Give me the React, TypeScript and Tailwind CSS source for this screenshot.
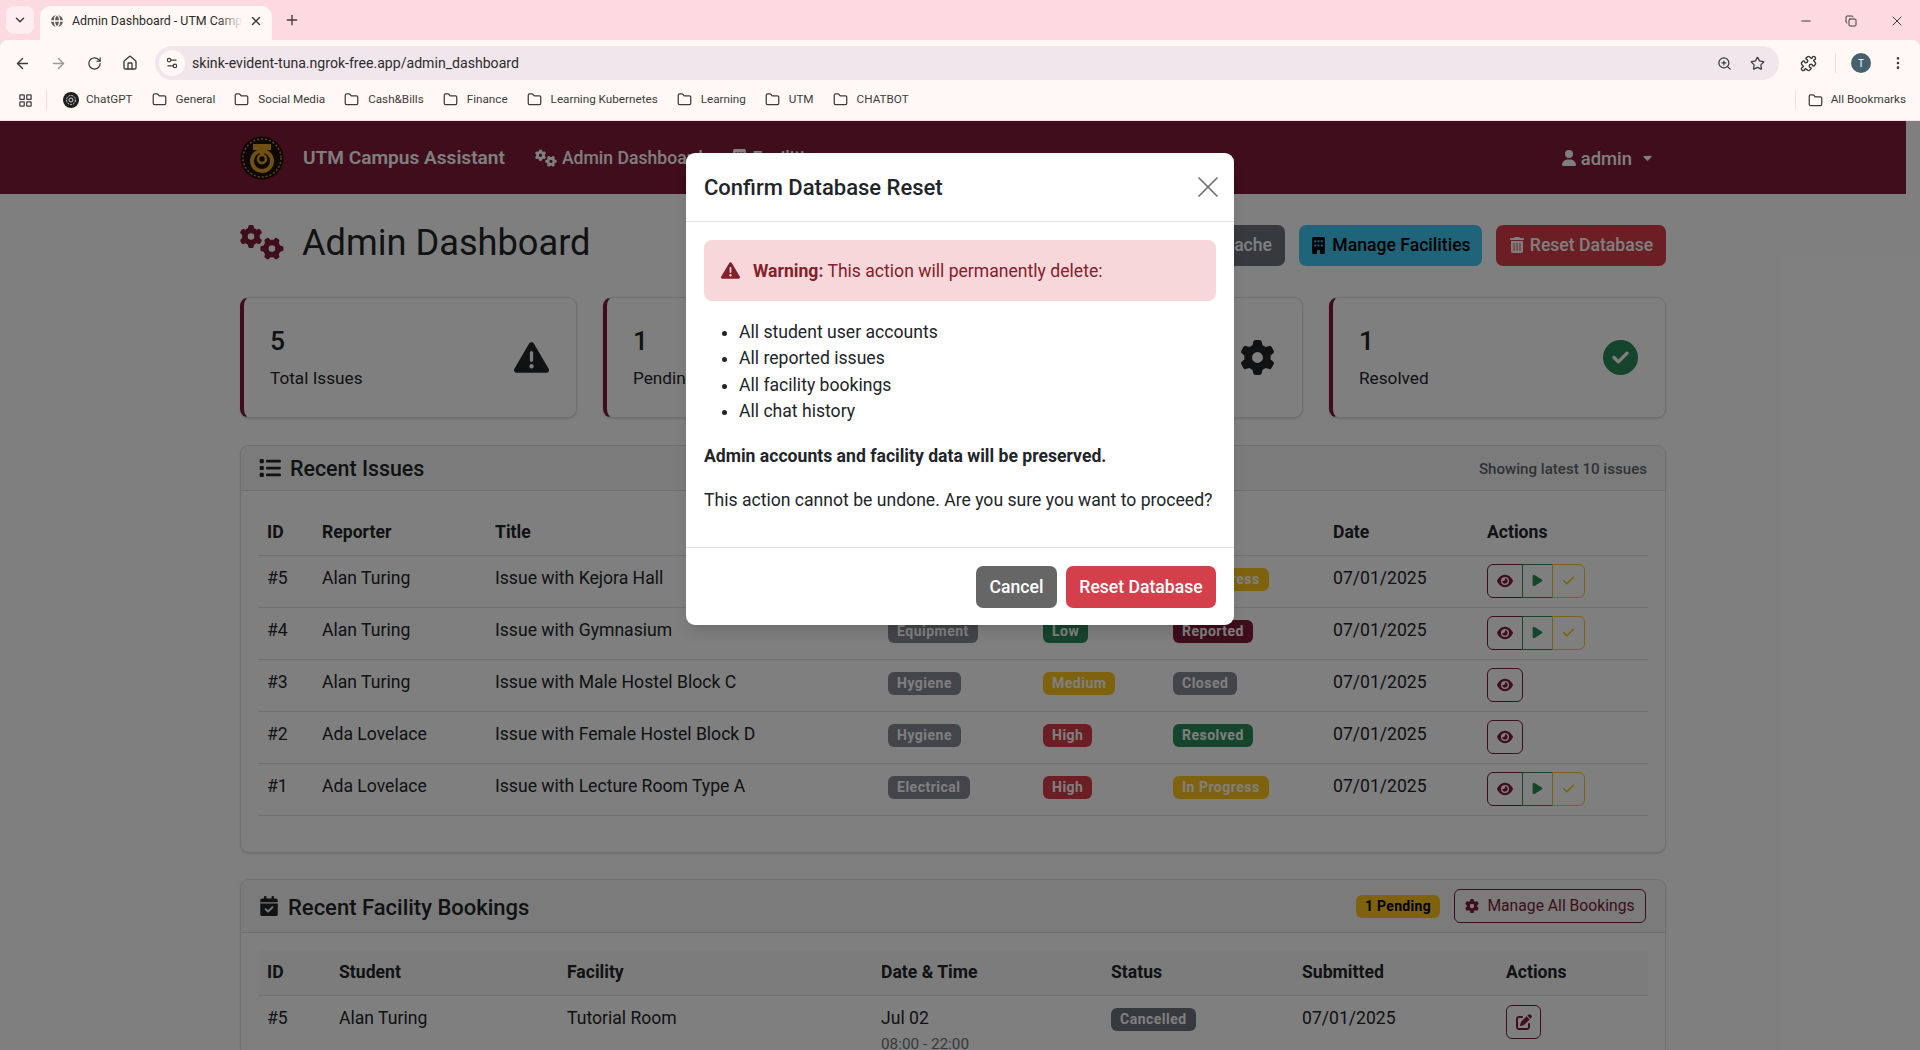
import {
  ArrowLeft,
  ArrowRight,
  ChevronDown,
  Copy,
  EllipsisVertical,
  Folder,
  Globe,
  House,
  LayoutGrid,
  Minus,
  Plus,
  Puzzle,
  RotateCw,
  Settings2,
  Star,
  X,
  ZoomIn,
} from "lucide-react";
import {
  FaBroom,
  FaBuilding,
  FaCalendarCheck,
  FaCaretDown,
  FaCheck,
  FaCircleCheck,
  FaEye,
  FaGear,
  FaGears,
  FaList,
  FaPenToSquare,
  FaPlay,
  FaTrashCan,
  FaTriangleExclamation,
  FaUser,
} from "react-icons/fa6";

const bookmarks = [
  "General",
  "Social Media",
  "Cash&Bills",
  "Finance",
  "Learning Kubernetes",
  "Learning",
  "UTM",
  "CHATBOT",
];

const gray = "bg-[#868b94] text-white";
const yellow = "bg-[#fdc51a] text-white";
const red = "bg-[#d63f4b] text-white";
const green = "bg-[#2c8a5a] text-white";
const maroon = "bg-[#7e1a36] text-white";

const issues = [
  { id: "#5", who: "Alan Turing", title: "Issue with Kejora Hall", cat: "Facility", pri: "Medium", priCls: yellow, status: "In Progress", statusCls: yellow, full: true },
  { id: "#4", who: "Alan Turing", title: "Issue with Gymnasium", cat: "Equipment", pri: "Low", priCls: green, status: "Reported", statusCls: maroon, full: true },
  { id: "#3", who: "Alan Turing", title: "Issue with Male Hostel Block C", cat: "Hygiene", pri: "Medium", priCls: yellow, status: "Closed", statusCls: gray, full: false },
  { id: "#2", who: "Ada Lovelace", title: "Issue with Female Hostel Block D", cat: "Hygiene", pri: "High", priCls: red, status: "Resolved", statusCls: green, full: false },
  { id: "#1", who: "Ada Lovelace", title: "Issue with Lecture Room Type A", cat: "Electrical", pri: "High", priCls: red, status: "In Progress", statusCls: yellow, full: true },
];

function Badge({ cls, children }: { cls: string; children: React.ReactNode }) {
  return (
    <span className={`inline-block rounded-[6px] px-[9px] py-[4px] text-[14px] leading-[15px] font-bold tracking-[0.5px] ${cls}`}>
      {children}
    </span>
  );
}

function BrowserChrome() {
  return (
    <div className="bg-[#fdd9e0] text-[#3c3c3c]">
      {/* Tab strip */}
      <div className="flex h-[40px] items-end pl-[6px]">
        <div className="mb-[6px] flex h-[28px] w-[28px] items-center justify-center rounded-[8px] bg-[#feeef1]">
          <ChevronDown size={14} strokeWidth={2.5} />
        </div>
        <div className="ml-[6px] flex h-[34px] w-[232px] items-center rounded-t-[10px] bg-[#fff8f5] pb-[4px] pl-[9px] pr-[9px]">
          <Globe size={16} className="shrink-0 fill-[#5a5a5a] text-[#fff8f5]" />
          <span className="relative ml-[7px] w-[178px] overflow-hidden text-[12.4px] whitespace-nowrap text-[#2c2c2c]">
            Admin Dashboard - UTM Campus Assistant
            <span className="absolute inset-y-0 right-0 w-[26px] bg-linear-to-r from-transparent to-[#fff8f5]" />
          </span>
          <X size={14} strokeWidth={2.5} className="ml-[6px] shrink-0" />
        </div>
        <Plus size={16} className="mb-[12px] ml-[12px]" />
        <div className="mb-[11px] ml-auto flex items-center gap-[32px] pr-[15px]">
          <Minus size={14} />
          <Copy size={12} />
          <X size={16} strokeWidth={1.5} />
        </div>
      </div>

      {/* Toolbar */}
      <div className="rounded-t-[8px] bg-[#fff8f5]">
        <div className="flex h-[46px] items-center pl-[14px]">
          <ArrowLeft size={17} />
          <ArrowRight size={17} className="ml-[19px] text-[#9a9a9a]" />
          <RotateCw size={15} className="ml-[20px]" />
          <House size={16} className="ml-[20px]" />
          <div className="ml-[17px] flex h-[34px] w-[1624px] items-center rounded-full bg-[#f0e6ec] pl-[4px] pr-[14px]">
            <div className="flex h-[26px] w-[26px] items-center justify-center rounded-full bg-[#fff8f5]">
              <Settings2 size={14} />
            </div>
            <span className="ml-[7px] pt-[1px] text-[14.1px] text-[#2c2c2c]">skink-evident-tuna.ngrok-free.app/admin_dashboard</span>
            <ZoomIn size={15} className="ml-auto" />
            <Star size={15} className="ml-[18px]" />
          </div>
          <Puzzle size={17} className="ml-[21px]" />
          <div className="ml-[18px] h-[20px] w-px bg-[#fdd9e0]" />
          <div className="ml-[15px] flex h-[20px] w-[20px] items-center justify-center rounded-full bg-[#47606e] text-[10px] text-white">
            T
          </div>
          <EllipsisVertical size={16} className="ml-[19px]" />
        </div>
        <div className="flex h-[35px] items-center border-b border-[#fbdde3] pb-[6px] pl-[18px] pr-[14px] text-[11.7px] text-[#3c3c3c]">
          <LayoutGrid size={15} />
          <div className="ml-[13px] h-[20px] w-px bg-[#fdd9e0]" />
          <svg width="16" height="16" viewBox="0 0 16 16" className="ml-[16px]">
            <circle cx="8" cy="8" r="8" fill="#1f1f1f" />
            <circle cx="8" cy="8" r="4.5" fill="none" stroke="#d8d8d8" strokeWidth="1" strokeDasharray="2 1" />
            <circle cx="8" cy="8" r="2" fill="none" stroke="#d8d8d8" strokeWidth="1" />
          </svg>
          <span className="ml-[7px]">ChatGPT</span>
          {bookmarks.map((b) => (
            <div key={b} className="ml-[19px] flex items-center gap-[9px]">
              <Folder size={15} />
              <span>{b}</span>
            </div>
          ))}
          <div className="ml-auto h-[20px] w-px bg-[#fdd9e0]" />
          <Folder size={15} className="ml-[12px]" />
          <span className="ml-[8px]">All Bookmarks</span>
        </div>
      </div>
    </div>
  );
}

function Navbar() {
  return (
    <div className="flex h-[73px] justify-center bg-[#7e1a36] text-white">
      <div className="flex w-[1426px] items-center">
        <svg width="44" height="44" viewBox="0 0 44 44" className="shrink-0">
          <circle cx="22" cy="22" r="21.5" fill="#1c1008" />
          <circle cx="22" cy="22" r="19" fill="none" stroke="#c8911f" strokeWidth="1.4" strokeDasharray="2 2" />
          <rect x="13" y="8" width="18" height="6" fill="#e0a026" />
          <rect x="20" y="14" width="4" height="6" fill="#e0a026" />
          <circle cx="22" cy="25" r="10" fill="none" stroke="#e0a026" strokeWidth="4" />
          <circle cx="22" cy="23" r="4" fill="none" stroke="#e0a026" strokeWidth="2.5" />
        </svg>
        <span className="ml-[19px] pt-[2px] text-[19.1px] font-semibold">UTM Campus Assistant</span>
        <FaGears size={22} className="ml-[30px]" />
        <span className="ml-[5px] pt-[2px] text-[17.6px] font-medium">Admin Dashboard</span>
        <FaBuilding size={17} className="ml-[28px]" />
        <span className="ml-[5px] pt-[2px] text-[17.6px] font-medium">Facilities</span>
        <FaUser size={16} className="ml-auto" />
        <span className="ml-[4px] pt-[2px] text-[18.4px] font-medium">admin</span>
        <FaCaretDown size={13} className="ml-[9px] mr-[12px]" />
      </div>
    </div>
  );
}

function StatCard({ value, label, icon }: { value: string; label: string; icon: React.ReactNode }) {
  return (
    <div className="flex h-[121px] items-center justify-between rounded-[9px] border border-l-[4.4px] border-[#dfdfdf] border-l-[#7e1a36] bg-white pl-[26px] pr-[27px] shadow-sm">
      <div>
        <div className="text-[26.4px] leading-[32px] font-medium text-[#212529]">{value}</div>
        <div className="mt-[8px] text-[17.2px] leading-[26px] text-[#212529]">{label}</div>
      </div>
      {icon}
    </div>
  );
}

function IconBtn({ cls, children }: { cls: string; children: React.ReactNode }) {
  return <div className={`flex h-[34px] items-center justify-center border ${cls}`}>{children}</div>;
}

function IssuesCard() {
  return (
    <div className="h-[408px] rounded-[9px] border border-[#e0e0e0] bg-white shadow-sm">
      <div className="flex h-[45px] items-center justify-between rounded-t-[9px] border-b border-[#e0e0e0] bg-[#f7f7f7] pl-[18px] pr-[18px]">
        <div className="flex items-center">
          <FaList size={22} className="text-[#212529]" />
          <span className="ml-[9px] pt-[2px] text-[21.4px] font-medium text-[#212529]">Recent Issues</span>
        </div>
        <span className="pt-[2px] text-[15.1px] font-medium text-[#5f676e]">Showing latest 10 issues</span>
      </div>
      <div className="px-[17px] pt-[17px]">
        <table className="w-[1390px] table-fixed border-collapse text-left text-[17.6px] leading-[26.4px] text-[#212529]">
          <colgroup>
            <col className="w-[55px]" />
            <col className="w-[173px]" />
            <col className="w-[393px]" />
            <col className="w-[155px]" />
            <col className="w-[130px]" />
            <col className="w-[160px]" />
            <col className="w-[154px]" />
            <col className="w-[170px]" />
          </colgroup>
          <thead>
            <tr className="h-[47px] border-b border-[#dee2e6] font-bold">
              {["ID", "Reporter", "Title", "Category", "Priority", "Status", "Date", "Actions"].map((h) => (
                <th key={h} className="px-[9px] pt-[2px] font-bold">{h}</th>
              ))}
            </tr>
          </thead>
          <tbody>
            {issues.map((r) => (
              <tr key={r.id} className="h-[52px] border-b border-[#dee2e6] align-top">
                <td className="px-[9px] pt-[9px]">{r.id}</td>
                <td className="px-[9px] pt-[9px]">{r.who}</td>
                <td className="px-[9px] pt-[9px]">{r.title}</td>
                <td className="px-[9px] pt-[9px]"><Badge cls={gray}>{r.cat}</Badge></td>
                <td className="px-[9px] pt-[9px]"><Badge cls={r.priCls}>{r.pri}</Badge></td>
                <td className="px-[9px] pt-[9px]"><Badge cls={r.statusCls}>{r.status}</Badge></td>
                <td className="px-[9px] pt-[9px]">07/01/2025</td>
                <td className="px-[9px] pt-[8px]">
                  <div className="flex">
                    {r.full ? (
                      <>
                        <IconBtn cls="w-[36px] rounded-l-[6px] border-[#7e1a36] text-[#7e1a36]"><FaEye size={16} /></IconBtn>
                        <IconBtn cls="-ml-px w-[31px] border-[#2c8a5a] text-[#2c8a5a]"><FaPlay size={13} /></IconBtn>
                        <IconBtn cls="-ml-px w-[33px] rounded-r-[6px] border-[#fdc51a] text-[#fdc51a]"><FaCheck size={13} /></IconBtn>
                      </>
                    ) : (
                      <IconBtn cls="w-[36px] rounded-[6px] border-[#7e1a36] text-[#7e1a36]"><FaEye size={16} /></IconBtn>
                    )}
                  </div>
                </td>
              </tr>
            ))}
          </tbody>
        </table>
      </div>
    </div>
  );
}

function BookingsCard() {
  return (
    <div className="mt-[26px] rounded-[9px] border border-[#e0e0e0] bg-white shadow-sm">
      <div className="flex h-[53px] items-center rounded-t-[9px] border-b border-[#e0e0e0] bg-[#f7f7f7] pl-[18px] pr-[19px]">
        <FaCalendarCheck size={20} className="text-[#212529]" />
        <span className="ml-[9px] pt-[2px] text-[22px] font-medium text-[#212529]">Recent Facility Bookings</span>
        <span className="ml-auto rounded-[6px] bg-[#fdc51a] px-[9px] py-[4px] text-[14px] leading-[15px] font-bold tracking-[0.3px] text-black">1 Pending</span>
        <div className="ml-[14px] flex h-[34px] w-[192px] items-center justify-center gap-[8px] rounded-[6px] border border-[#7e1a36] text-[15.7px] text-[#7e1a36]">
          <FaGear size={14} />
          <span>Manage All Bookings</span>
        </div>
      </div>
      <div className="px-[17px] pt-[17px]">
        <table className="w-[1390px] table-fixed border-collapse text-left text-[17.6px] leading-[26.4px] text-[#212529]">
          <colgroup>
            <col className="w-[72px]" />
            <col className="w-[228px]" />
            <col className="w-[314px]" />
            <col className="w-[230px]" />
            <col className="w-[191px]" />
            <col className="w-[204px]" />
            <col className="w-[151px]" />
          </colgroup>
          <thead>
            <tr className="h-[45px] border-b border-[#dee2e6] bg-[#f8f9fa]">
              {["ID", "Student", "Facility", "Date & Time", "Status", "Submitted", "Actions"].map((h) => (
                <th key={h} className="px-[9px] font-bold">{h}</th>
              ))}
            </tr>
          </thead>
          <tbody>
            <tr className="align-top">
              <td className="px-[9px] pt-[9px]">#5</td>
              <td className="px-[9px] pt-[9px]">Alan Turing</td>
              <td className="px-[9px] pt-[9px]">Tutorial Room</td>
              <td className="px-[9px] pt-[9px]">
                <div>Jul 02</div>
                <div className="text-[15.3px] text-[#6c757d]">08:00 - 22:00</div>
              </td>
              <td className="px-[9px] pt-[9px]"><Badge cls="bg-[#6c757d] text-white">Cancelled</Badge></td>
              <td className="px-[9px] pt-[9px]">07/01/2025</td>
              <td className="px-[9px] pt-[9px]">
                <IconBtn cls="w-[35px] rounded-[6px] border-[#7e1a36] text-[#7e1a36]"><FaPenToSquare size={16} /></IconBtn>
              </td>
            </tr>
          </tbody>
        </table>
      </div>
    </div>
  );
}

function ResetModal() {
  return (
    <div className="absolute left-[686px] top-[32px] w-[548px] rounded-[9px] bg-white text-[17.6px] leading-[26.4px] text-[#212529] shadow-lg">
      <div className="flex h-[69px] items-center justify-between border-b border-[#dee2e6] px-[18px]">
        <h5 className="pt-[2px] text-[22px] font-medium">Confirm Database Reset</h5>
        <X size={36} strokeWidth={1.1} className="-mr-[10px] text-[#6e6e6e]" />
      </div>
      <div className="p-[18px] pb-[34px]">
        <div className="flex h-[61px] items-center rounded-[8px] bg-[#f8d7da] pl-[17px] text-[#842029]">
          <FaTriangleExclamation size={19} />
          <span className="ml-[13px] pt-[2px]"><b>Warning:</b> This action will permanently delete:</span>
        </div>
        <ul className="mt-[18px] list-disc pl-[35px]">
          <li>All student user accounts</li>
          <li>All reported issues</li>
          <li>All facility bookings</li>
          <li>All chat history</li>
        </ul>
        <p className="mt-[18px] font-bold">Admin accounts and facility data will be preserved.</p>
        <p className="mt-[18px]">This action cannot be undone. Are you sure you want to proceed?</p>
      </div>
      <div className="flex h-[78px] items-center justify-end gap-[9px] border-t border-[#dee2e6] px-[18px]">
        <button className="h-[42px] w-[81px] rounded-[7px] bg-[#666666] font-medium text-white">Cancel</button>
        <button className="h-[42px] w-[150px] rounded-[7px] bg-[#d33f4b] font-medium text-white">Reset Database</button>
      </div>
    </div>
  );
}

export default function App() {
  return (
    <div className="h-[1050px] w-[1920px] overflow-hidden bg-white font-['Roboto',sans-serif]">
      <BrowserChrome />
      <div className="relative flex h-[929px]">
        <div className="w-[1906px] shrink-0">
          <Navbar />
          <div className="mx-auto w-[1426px] pt-[26px]">
            {/* Page title and actions */}
            <div className="flex h-[50px] items-center justify-between">
              <div className="flex items-center">
                <FaGears size={44} className="-mt-[6px] text-[#7e1a36]" />
                <h1 className="ml-[18px] -mt-[3px] text-[36.2px] font-normal text-[#212529]">Admin Dashboard</h1>
              </div>
              <div className="flex gap-[14px] text-[17.6px] font-medium">
                <div className="flex h-[41px] items-center gap-[5px] rounded-[7px] bg-[#6c757d] px-[13px] text-white">
                  <FaBroom size={16} />
                  <span>Clear Cache</span>
                </div>
                <div className="flex h-[41px] w-[183px] items-center justify-center gap-[5px] rounded-[7px] bg-[#3fc9f2] text-black">
                  <FaBuilding size={17} />
                  <span>Manage Facilities</span>
                </div>
                <div className="flex h-[41px] w-[170px] items-center justify-center gap-[5px] rounded-[7px] bg-[#d63f4b] text-white">
                  <FaTrashCan size={16} />
                  <span>Reset Database</span>
                </div>
              </div>
            </div>

            <div className="mt-[27px] grid grid-cols-4 gap-[26px]">
              <StatCard value="5" label="Total Issues" icon={<FaTriangleExclamation size={35} className="text-[#212529]" />} />
              <StatCard value="1" label="Pending" icon={<FaTriangleExclamation size={35} className="text-[#212529]" />} />
              <StatCard value="3" label="In Progress" icon={<FaGear size={35} className="text-[#212529]" />} />
              <StatCard value="1" label="Resolved" icon={<FaCircleCheck size={35} className="text-[#2c8a5a]" />} />
            </div>

            <div className="mt-[27px]">
              <IssuesCard />
              <BookingsCard />
            </div>
          </div>
        </div>

        {/* Modal backdrop */}
        <div className="absolute inset-0 bg-black/50" />
        <ResetModal />
      </div>
    </div>
  );
}
